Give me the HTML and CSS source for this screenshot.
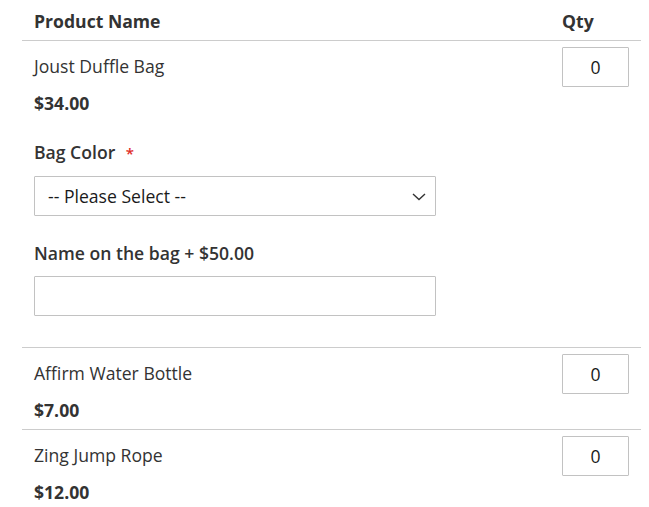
FILE: index.html
```html
<!DOCTYPE html>
<html>
<head>
<meta charset="utf-8">
<link rel="stylesheet" href="styles.css">
</head>
<body>
<div class="wrap">
<table class="grouped">
  <thead>
    <tr>
      <th class="col-name">Product Name</th>
      <th class="col-qty">Qty</th>
    </tr>
  </thead>
  <tbody>
    <tr>
      <td class="col-name">
        <div class="item-name">Joust Duffle Bag</div>
        <div class="price">$34.00</div>
        <div class="options">
          <div class="field">
            <label class="label">Bag Color <span class="req">*</span></label>
            <div class="select-wrap">
              <select class="select"><option>-- Please Select --</option></select>
              <svg class="chev" width="14" height="8" viewBox="0 0 14 8"><path d="M1 1 L7 6.5 L13 1" fill="none" stroke="#333" stroke-width="1.4"/></svg>
            </div>
          </div>
          <div class="field">
            <label class="label">Name on the bag + $50.00</label>
            <input class="text" type="text">
          </div>
        </div>
      </td>
      <td class="col-qty"><input class="qty" type="text" value="0"></td>
    </tr>
    <tr>
      <td class="col-name">
        <div class="item-name">Affirm Water Bottle</div>
        <div class="price">$7.00</div>
      </td>
      <td class="col-qty"><input class="qty" type="text" value="0"></td>
    </tr>
    <tr>
      <td class="col-name">
        <div class="item-name">Zing Jump Rope</div>
        <div class="price">$12.00</div>
      </td>
      <td class="col-qty"><input class="qty" type="text" value="0"></td>
    </tr>
  </tbody>
</table>
</div>
</body>
</html>
```
FILE: styles.css
```css
html, body {
  margin: 0;
  padding: 0;
  background: #fff;
}
body {
  font-family: "Open Sans", "Liberation Sans", sans-serif;
  font-size: 17.6px;
  color: #333;
}
.wrap {
  padding-left: 22px;
  width: 619px;
}
.grouped {
  width: 100%;
  border-collapse: collapse;
  border-spacing: 0;
}
.grouped th {
  font-weight: 700;
  text-align: left;
  line-height: 24px;
  padding: 9px 12px 7px;
  border-bottom: 1px solid #cccccc;
}
.grouped td {
  vertical-align: top;
  padding: 6px 12px 7px;
  border-bottom: 1px solid #cccccc;
}
.grouped tr:last-child td {
  border-bottom: none;
}
.grouped .col-qty {
  width: 67px;
}
.item-name {
  margin-top: 7px;
  line-height: 24px;
  font-weight: 400;
}
.price {
  margin-top: 13px;
  line-height: 24px;
  font-weight: 700;
}
.options {
  margin-top: 25px;
  margin-bottom: 24px;
}
.field + .field {
  margin-top: 25px;
}
.label {
  display: block;
  font-weight: 600;
  line-height: 24px;
  margin-bottom: 11px;
}
.req {
  color: #e02b27;
  font-size: 15px;
  margin-left: 6px;
}
.select-wrap {
  position: relative;
  width: 402px;
}
.select {
  appearance: none;
  -webkit-appearance: none;
  display: block;
  width: 402px;
  height: 40px;
  box-sizing: border-box;
  border: 1px solid #c2c2c2;
  border-radius: 1px;
  background: #fff;
  padding: 0 30px 0 13px;
  font-family: "Open Sans", "Liberation Sans", sans-serif;
  font-size: 17.6px;
  color: #1a1a1a;
}
.chev {
  position: absolute;
  right: 10px;
  top: 17px;
}
.text {
  display: block;
  width: 402px;
  height: 40px;
  box-sizing: border-box;
  border: 1px solid #c2c2c2;
  border-radius: 1px;
  padding: 0 10px;
  font-family: "Open Sans", "Liberation Sans", sans-serif;
  font-size: 17.6px;
}
.qty {
  display: block;
  width: 67px;
  height: 40px;
  box-sizing: border-box;
  border: 1px solid #c2c2c2;
  border-radius: 1px;
  text-align: center;
  font-family: "Open Sans", "Liberation Sans", sans-serif;
  font-size: 17.6px;
  color: #1a1a1a;
  padding: 0;
}
```
